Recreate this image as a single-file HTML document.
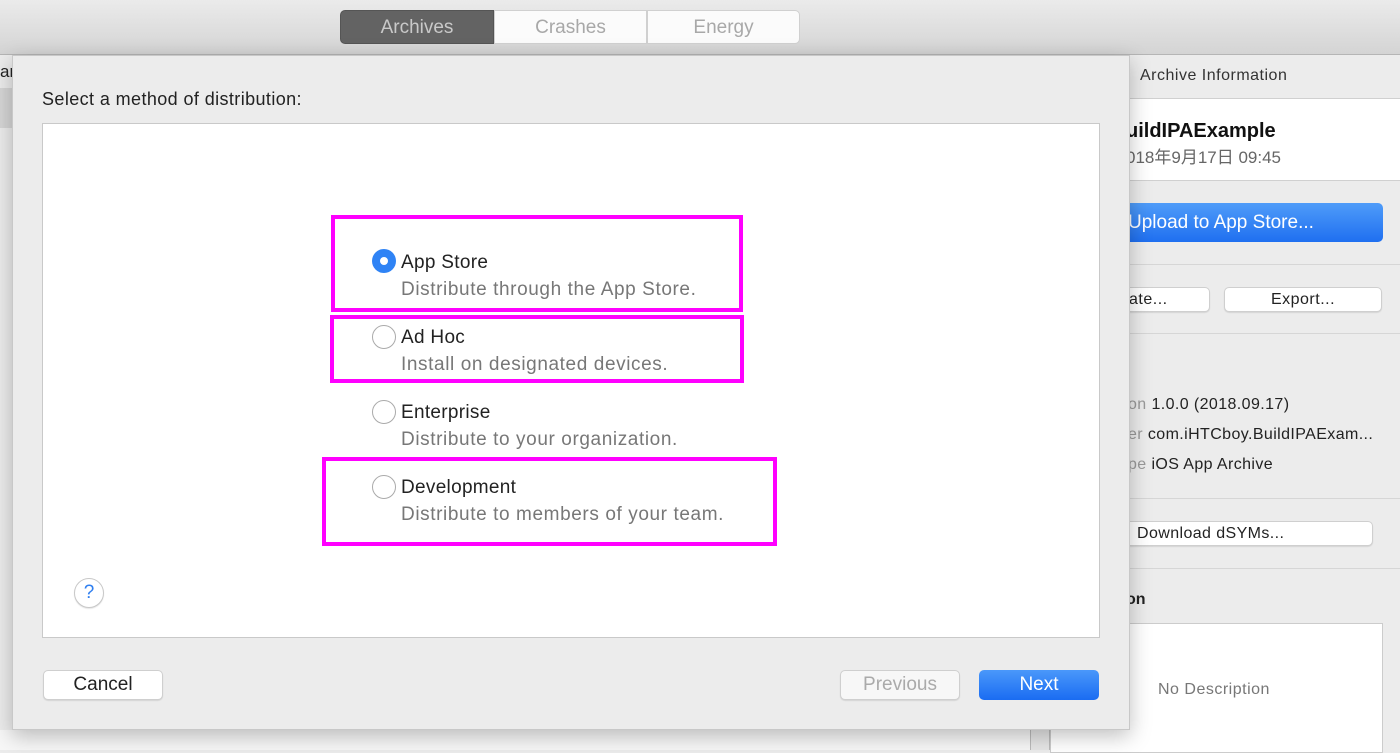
<!DOCTYPE html>
<html><head><meta charset="utf-8"><style>
*{margin:0;padding:0;box-sizing:border-box}
body{width:1400px;height:750px;overflow:hidden;position:relative;font-family:"Liberation Sans","Noto Sans CJK SC",sans-serif;background:#ececec;color:#222}
.abs{position:absolute}
.tb{left:0;top:0;width:1400px;height:55px;background:linear-gradient(#ebebeb,#d4d4d4);border-bottom:1px solid #b5b5b5}
.seg{top:10px;height:34px;font-size:19px;line-height:34px;text-align:center;color:#a8a8a8;background:#fbfbfb;border:1px solid #d0d0d0}
.btn{background:#fff;border:1px solid #cfcfcf;border-radius:5px;text-align:center;box-shadow:0 1px 1px rgba(0,0,0,.1)}
.sep{left:1130px;width:270px;height:1px;background:#d6d6d6}
.radio{width:24px;height:24px;border-radius:50%;border:1px solid #aaa;background:#fff}
.title{font-size:19px;color:#222;letter-spacing:0.3px}
.desc{font-size:19px;color:#777;letter-spacing:0.6px}
.mag{border:4px solid #f0f}
</style></head><body>
<div class="abs tb"></div>
<div class="abs seg" style="left:340px;width:154px;background:#636363;color:#c9c9c9;border-color:#555;border-radius:5px 0 0 5px">Archives</div>
<div class="abs seg" style="left:494px;width:153px">Crashes</div>
<div class="abs seg" style="left:647px;width:153px;border-radius:0 5px 5px 0">Energy</div>

<div class="abs" style="left:0;top:62px;font-size:17px">ar</div>
<div class="abs" style="left:0;top:88px;width:12px;height:40px;background:#d6d6d6"></div>

<div class="abs" style="left:1140px;top:67px;font-size:16px;color:#333;letter-spacing:0.5px">Archive Information</div>
<div class="abs" style="left:1130px;top:98px;width:270px;height:83px;background:#fff;border-top:1px solid #d0d0d0;border-bottom:1px solid #d0d0d0"></div>
<div class="abs" style="left:1126px;top:120px;font-size:20px;font-weight:bold;color:#111">uildIPAExample</div>
<div class="abs" style="left:1126px;top:143px;font-size:17px;color:#666">018年9月17日 09:45</div>
<div class="abs" style="left:1100px;top:203px;width:283px;height:39px;border-radius:5px;background:linear-gradient(#4f9cf9,#1f6ff0);color:#fff;font-size:19px;line-height:39px;padding-left:28px">Upload to App Store...</div>
<div class="abs sep" style="top:264px"></div>
<div class="abs btn" style="left:1100px;top:287px;width:110px;height:25px;font-size:16px;line-height:24px;padding-left:28px;text-align:left;letter-spacing:0.5px">ate...</div>
<div class="abs btn" style="left:1224px;top:287px;width:158px;height:25px;font-size:16px;line-height:24px;letter-spacing:0.5px">Export...</div>
<div class="abs sep" style="top:333px"></div>
<div class="abs" style="left:1128px;top:390px;font-size:16px;line-height:30px;color:#222;white-space:nowrap;letter-spacing:0.4px">
<div><span style="color:#999">on </span>1.0.0 (2018.09.17)</div>
<div><span style="color:#999">er </span>com.iHTCboy.BuildIPAExam...</div>
<div><span style="color:#999">pe </span>iOS App Archive</div></div>
<div class="abs sep" style="top:498px"></div>
<div class="abs btn" style="left:1100px;top:521px;width:273px;height:25px;font-size:16px;line-height:24px;text-align:left;padding-left:36px;letter-spacing:0.4px">Download dSYMs...</div>
<div class="abs sep" style="top:568px"></div>
<div class="abs" style="left:1126px;top:591px;font-size:16px;font-weight:bold">on</div>
<div class="abs" style="left:1050px;top:623px;width:333px;height:130px;background:#fff;border:1px solid #ccc"></div>
<div class="abs" style="left:1158px;top:681px;font-size:16px;color:#777;letter-spacing:0.5px">No Description</div>

<div class="abs" style="left:0;top:730px;width:1050px;height:20px;background:#f7f7f7"></div>
<div class="abs" style="left:1030px;top:730px;width:20px;height:20px;background:#e6e6e6;border-left:1px solid #bbb;border-right:1px solid #bbb"></div>

<div class="abs" style="left:12px;top:55px;width:1118px;height:675px;background:#ececec;border:1px solid #c8c8c8;box-shadow:0 6px 20px rgba(0,0,0,.25)"></div>
<div class="abs" style="left:42px;top:89px;font-size:18px;color:#222;letter-spacing:0.4px">Select a method of distribution:</div>
<div class="abs" style="left:42px;top:123px;width:1058px;height:515px;background:#fff;border:1px solid #c9c9c9"></div>

<div class="abs radio" style="left:372px;top:249px;border:none;background:#2f83f5"><div class="abs" style="left:8px;top:8px;width:8px;height:8px;border-radius:50%;background:#fff"></div></div>
<div class="abs title" style="left:401px;top:252px">App Store</div>
<div class="abs desc" style="left:401px;top:279px">Distribute through the App Store.</div>
<div class="abs radio" style="left:372px;top:325px"></div>
<div class="abs title" style="left:401px;top:327px">Ad Hoc</div>
<div class="abs desc" style="left:401px;top:354px">Install on designated devices.</div>
<div class="abs radio" style="left:372px;top:400px"></div>
<div class="abs title" style="left:401px;top:402px">Enterprise</div>
<div class="abs desc" style="left:401px;top:429px">Distribute to your organization.</div>
<div class="abs radio" style="left:372px;top:475px"></div>
<div class="abs title" style="left:401px;top:477px">Development</div>
<div class="abs desc" style="left:401px;top:504px">Distribute to members of your team.</div>

<div class="abs mag" style="left:331px;top:215px;width:412px;height:97px"></div>
<div class="abs mag" style="left:330px;top:315px;width:414px;height:68px"></div>
<div class="abs mag" style="left:322px;top:457px;width:455px;height:89px"></div>

<div class="abs" style="left:74px;top:578px;width:30px;height:30px;border-radius:50%;border:1px solid #c8c8c8;background:#fff;color:#2f7ff0;font-size:19px;text-align:center;line-height:28px;box-shadow:0 1px 1px rgba(0,0,0,.1)">?</div>

<div class="abs btn" style="left:43px;top:670px;width:120px;height:30px;font-size:19px;line-height:28px">Cancel</div>
<div class="abs btn" style="left:840px;top:670px;width:120px;height:30px;font-size:19px;line-height:28px;color:#aaa;background:#f7f7f7">Previous</div>
<div class="abs" style="left:979px;top:670px;width:120px;height:30px;border-radius:5px;background:linear-gradient(#4a98fa,#1a6cf2);color:#fff;font-size:19px;line-height:30px;text-align:center">Next</div>
</body></html>
